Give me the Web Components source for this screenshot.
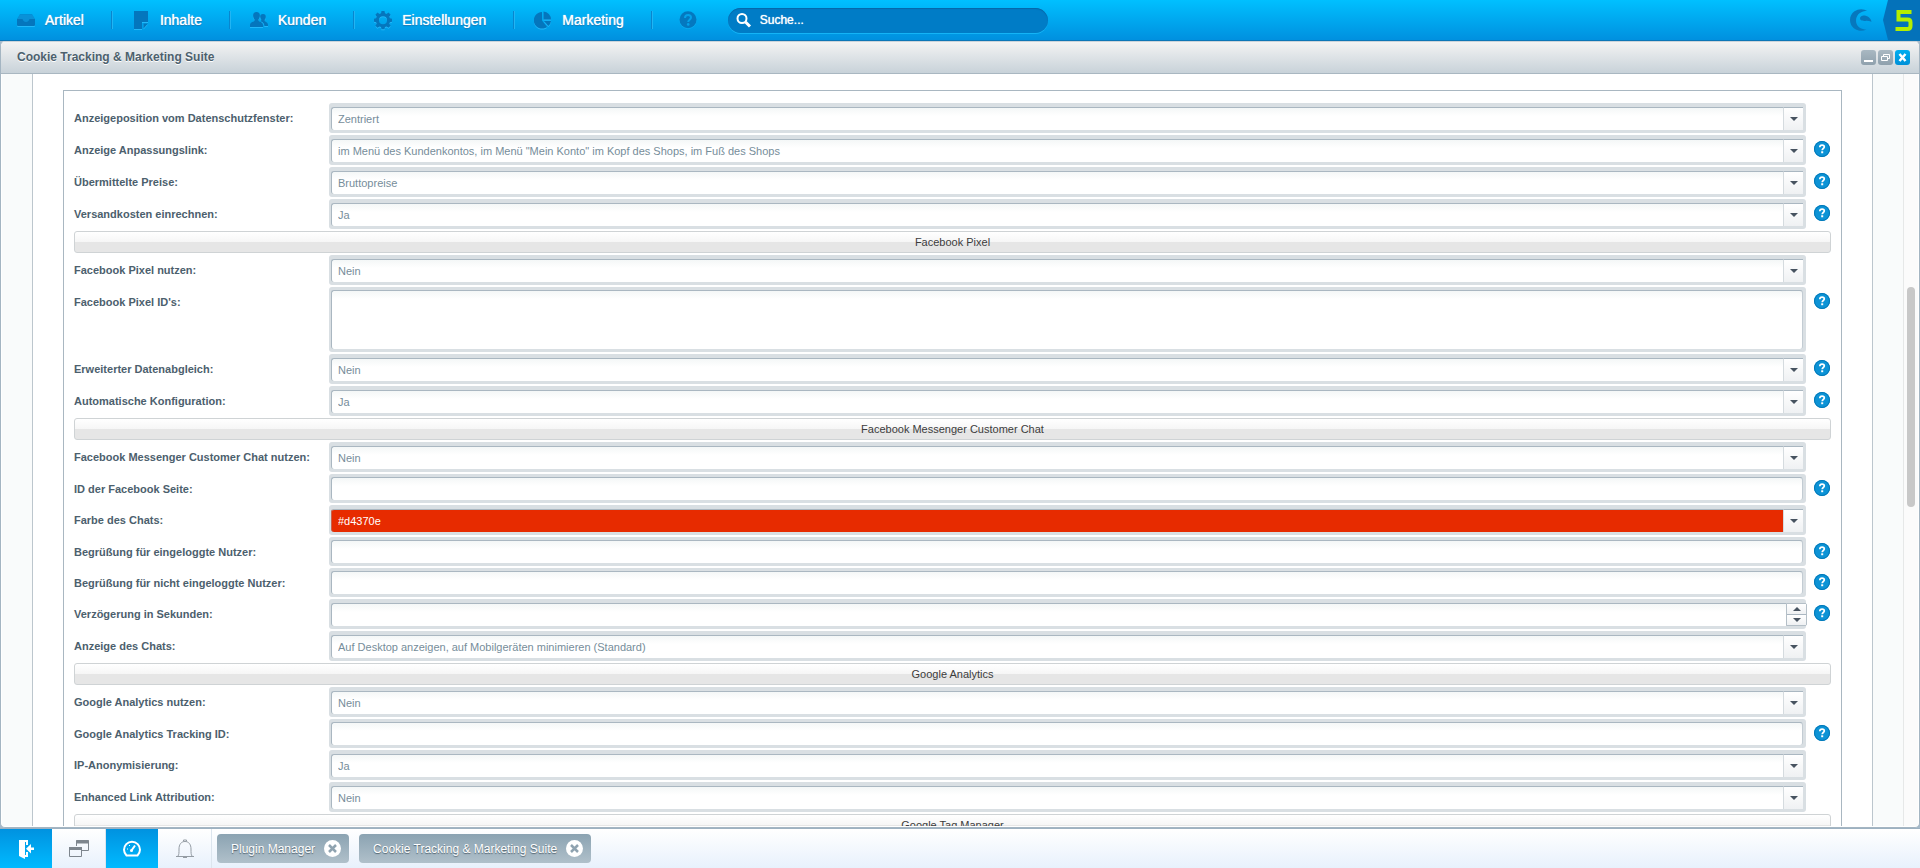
<!DOCTYPE html>
<html lang="de">
<head>
<meta charset="utf-8">
<title>Cookie Tracking &amp; Marketing Suite</title>
<style>
  html, body { margin: 0; height: 100%; }
  body { font-family: "Liberation Sans", Arial, sans-serif; font-size: 11px; background: #fff; overflow: hidden; }
</style>
</head>
<body>
<backend-shell>
  <menu-bar slot="menu">
    <menu-entry label="Artikel" icon="inbox"></menu-entry>
    <menu-entry label="Inhalte" icon="note"></menu-entry>
    <menu-entry label="Kunden" icon="people"></menu-entry>
    <menu-entry label="Einstellungen" icon="gear"></menu-entry>
    <menu-entry label="Marketing" icon="pie"></menu-entry>
  </menu-bar>
  <app-window heading="Cookie Tracking &amp; Marketing Suite">
    <setting-row label="Anzeigeposition vom Datenschutzfenster:" kind="select" value="Zentriert"></setting-row>
    <setting-row label="Anzeige Anpassungslink:" kind="select" value="im Menü des Kundenkontos, im Menü &quot;Mein Konto&quot; im Kopf des Shops, im Fuß des Shops" help></setting-row>
    <setting-row label="Übermittelte Preise:" kind="select" value="Bruttopreise" help></setting-row>
    <setting-row label="Versandkosten einrechnen:" kind="select" value="Ja" help></setting-row>
    <section-bar>Facebook Pixel</section-bar>
    <setting-row label="Facebook Pixel nutzen:" kind="select" value="Nein"></setting-row>
    <setting-row label="Facebook Pixel ID's:" kind="area" help></setting-row>
    <setting-row label="Erweiterter Datenabgleich:" kind="select" value="Nein" help></setting-row>
    <setting-row label="Automatische Konfiguration:" kind="select" value="Ja" help></setting-row>
    <section-bar>Facebook Messenger Customer Chat</section-bar>
    <setting-row label="Facebook Messenger Customer Chat nutzen:" kind="select" value="Nein"></setting-row>
    <setting-row label="ID der Facebook Seite:" kind="text" help></setting-row>
    <setting-row label="Farbe des Chats:" kind="color" value="#d4370e"></setting-row>
    <setting-row label="Begrüßung für eingeloggte Nutzer:" kind="text" help></setting-row>
    <setting-row label="Begrüßung für nicht eingeloggte Nutzer:" kind="text" help></setting-row>
    <setting-row label="Verzögerung in Sekunden:" kind="spin" help></setting-row>
    <setting-row label="Anzeige des Chats:" kind="select" value="Auf Desktop anzeigen, auf Mobilgeräten minimieren (Standard)"></setting-row>
    <section-bar>Google Analytics</section-bar>
    <setting-row label="Google Analytics nutzen:" kind="select" value="Nein"></setting-row>
    <setting-row label="Google Analytics Tracking ID:" kind="text" help></setting-row>
    <setting-row label="IP-Anonymisierung:" kind="select" value="Ja"></setting-row>
    <setting-row label="Enhanced Link Attribution:" kind="select" value="Nein"></setting-row>
    <section-bar>Google Tag Manager</section-bar>
  </app-window>
  <task-bar slot="tasks">
    <task-item>Plugin Manager</task-item>
    <task-item>Cookie Tracking &amp; Marketing Suite</task-item>
  </task-bar>
</backend-shell>

<script>
const MENU_ICONS = {
  inbox: '<path d="M3 4h12l3 5v5.500a1.500 1.500 0 0 1-1.500 1.500h-15A1.500 1.500 0 0 1 0 14.500V9z" opacity=".55"/><path d="M0 9h5.500c.6 2 1.800 3 3.500 3s2.900-1 3.500-3H18v5.500a1.500 1.500 0 0 1-1.500 1.500h-15A1.500 1.500 0 0 1 0 14.500z"/>',
  note: '<path d="M2 1h14v11h-6v7H2z"/><path d="M11.500 13.500H16l-4.500 5z"/>',
  people: '<path d="M6.500 2c2.300 0 3.500 1.600 3.400 3.800-.1 1.600-.7 2.800-1.400 3.500v1.500c0 1 4.500 1.200 4.500 4.200v2H0v-2c0-3 4.500-3.200 4.500-4.200V9.300C3.800 8.600 3.200 7.400 3.100 5.800 3 3.600 4.200 2 6.500 2z"/><path d="M13 4c1.900 0 2.900 1.300 2.800 3.100-.1 1.200-.5 2.100-1.100 2.700v1.300c0 .8 3.300 1.200 3.300 3.600V16h-3.600c-.1-2.600-1.600-3.900-3.800-4.800.4-.4.700-.8.700-1.300 0-.5-.9-1.600-1.100-2.800C10 5.300 11.100 4 13 4z"/>',
  gear: '<path fill-rule="evenodd" d="m7.500 1 3 0 .5 2.300 1.500.6 2-1.300 2.100 2.100-1.300 2 .6 1.500 2.100.5v3l-2.100.5-.6 1.500 1.300 2-2.100 2.100-2-1.300-1.500.6-.5 2.100h-3L7 17.100l-1.500-.6-2 1.300-2.100-2.100 1.300-2-.6-1.500L0 11.700v-3l2.100-.5.6-1.500-1.300-2 2.100-2.100 2 1.300L7 3.300zM9 6.200a4 4 0 1 0 0 8 4 4 0 0 0 0-8z"/>',
  pie: '<path d="M8 2v8.500l5 6.500A8.300 8.300 0 1 1 8 2z"/><path d="M9.500 1.500a8 8 0 0 1 7.500 8H9.500z"/><path d="M10 11h7a7.500 7.500 0 0 1-2.700 5z"/>'
};

function define(name, html, setup) {
  const template = document.createElement('template');
  template.innerHTML = html;
  customElements.define(name, class extends HTMLElement {
    constructor() {
      super();
      this.attachShadow({ mode: 'open' }).append(template.content.cloneNode(true));
    }
    connectedCallback() {
      if (setup && !this.ready) { this.ready = true; setup(this, this.shadowRoot); }
    }
  });
}

define('backend-shell', `
<style>
  :host { display: flex; flex-direction: column; height: 100vh; overflow: hidden; background: #a5bacb; }
  main { flex: 1; min-height: 0; display: flex; }
</style>
<slot name="menu"></slot>
<main><slot></slot></main>
<slot name="tasks"></slot>`);

define('menu-bar', `
<style>
  :host { display: flex; align-items: center; height: 40px; flex: none; border-bottom: 1px solid #0c76b6;
    background: linear-gradient(#00c0ff, #0090df); }
  nav { display: flex; align-items: center; }
  button { border: 0; padding: 0; background: none; display: flex; cursor: pointer; }
  .help { margin-left: 27px; }
  search { display: flex; align-items: center; box-sizing: border-box; width: 320px; height: 25px; margin-left: 31px; padding-left: 8px; gap: 8px;
    border-radius: 13px; background: #007cc6; box-shadow: inset 0 1px 1px #0568a8, 0 1px 0 #14b4f6; }
  input { flex: 1; min-width: 0; border: 0; padding: 0; background: none; outline: 0; color: #fff; font: 12px "Liberation Sans", Arial, sans-serif; text-shadow: 0 0 1px #fff; }
  input::placeholder { color: #fff; opacity: 1; }
  .mark { margin-left: auto; margin-right: 9px; }
  .five { width: 38px; height: 40px; }
</style>
<nav aria-label="Hauptmenü"><slot></slot></nav>
<button class="help" aria-label="Hilfe"><svg width="18" height="18" viewBox="0 0 18 18"><circle cx="9" cy="9.500" r="8.500" fill="#0cb0f4"/><circle cx="9" cy="8.700" r="8.500" fill="#0478bf"/><path d="M6 7c0-2 1.300-3 3.100-3S12 5 12 6.600C12 8.700 9.200 8.700 9.200 11" fill="none" stroke="#05a2ea" stroke-width="2"/><circle cx="9.200" cy="13.400" r="1.300" fill="#05a2ea"/></svg></button>
<search>
  <svg width="16" height="16" viewBox="0 0 16 16" fill="none" stroke="#fff"><circle cx="6" cy="6.500" r="4.500" stroke-width="2"/><path d="m9.500 10 4.500 4.500" stroke-width="3"/></svg>
  <input type="text" placeholder="Suche..." aria-label="Suche">
</search>
<svg class="mark" width="24" height="24" viewBox="0 0 24 24" fill="#0678bd"><path d="M18.500 3.200C15 .6 9.500.4 5.500 3.300 1 6.500 0 12 2 16.500c2.500 5.500 9.500 8 15.500 5-5 0-9.500-2.500-10.300-7C6.200 8.500 10 4.300 15 3.300c1.300-.2 2.500-.3 3.500-.1z"/><path d="M11.500 11.800c-1.200-2 .3-4.200 3-4.300 4 0 7.500 2.500 8 6.300-2-.9-4-1-6-.9-2.200.1-4-.1-5-1.100z"/></svg>
<svg class="five" viewBox="0 0 38 40"><path d="M6 0h32v40H6L1 20z" fill="#0472ba"/><path d="M29.500 12H16.500v7.500h9q3 0 3 3v3.500q0 3-3 3H13.500" fill="none" stroke="#b4ee00" stroke-width="4"/></svg>`);

define('menu-entry', `
<style>
  :host { display: flex; align-items: center; border-right: 1px solid #0886ce; box-shadow: 1px 0 #22b5f3; height: 18px; padding: 0 27px 0 20px; }
  :host(:first-child) { padding-left: 17px; }
  button { display: flex; align-items: center; gap: 10px; height: 20px; padding: 0; border: 0; background: none; cursor: pointer;
    color: #fff; font: 14px "Liberation Sans", Arial, sans-serif; text-shadow: 0 0 1px #fff, 0 1px 1px #0468a6; }
  svg { filter: drop-shadow(0 1px 0 #22b8fa); }
</style>
<button><svg width="18" height="20" viewBox="0 0 18 20" fill="#0476bd"></svg><span></span></button>`,
(host, root) => {
  root.querySelector('svg').innerHTML = MENU_ICONS[host.getAttribute('icon')];
  root.querySelector('span').textContent = host.getAttribute('label');
});

define('app-window', `
<style>
  :host { flex: 1; min-width: 0; display: flex; flex-direction: column; border: 1px solid #a4b5c2; border-top-color: #ccd4da; border-radius: 5px; overflow: hidden; background: #fff; }
  header { display: flex; align-items: center; height: 31px; flex: none; padding: 0 9px 0 16px; gap: 2px;
    border-bottom: 1px solid #a9b7c1; background: linear-gradient(#f3f3f3, #c8d2d9); }
  h1 { flex: 1; margin: 0 0 2px; font-size: 12px; line-height: 16px; color: #4c606d; text-shadow: 0 1px 0 #fff; }
  header button { width: 15px; height: 15px; margin-bottom: 1px; padding: 0; border: 0; border-radius: 3px; background: linear-gradient(#a9b8c2, #8fa1ad); display: flex; }
  header .close { background: linear-gradient(#00aef0, #0090d8); }
  .body { flex: 1; min-height: 0; display: flex; margin: 0 1px 1px; background: #f9fbfb; }
  .page { flex: 1; min-width: 0; margin: 0 30px; padding: 16px 30px 0; overflow: hidden; background: #fff; border: solid #bcc6cd; border-width: 0 1px; }
  form { display: grid; gap: 2px; padding: 12px 10px; border: 1px solid #a9b7c1; }
  .scroll { width: 14px; flex: none; border-left: 1px solid #e6e8e8; background: #fbfbfb; display: grid; grid-template-rows: 213fr 220fr 319fr; justify-items: center; }
  .thumb { grid-row: 2; width: 8px; border-radius: 4px; background: #c8c8c8; }
</style>
<header>
  <h1></h1>
  <button aria-label="Minimieren"><svg width="15" height="15"><path d="M3 10h9v2H3z" fill="#fff"/></svg></button>
  <button aria-label="Wiederherstellen"><svg width="15" height="15" fill="none" stroke="#fff"><path d="M5.500 6.500v-2h6v4h-2M3.500 6.500h6v4h-6z"/></svg></button>
  <button class="close" aria-label="Schließen"><svg width="15" height="15"><path d="m4.500 4 6 7M10.500 4l-6 7" stroke="#fff" stroke-width="2.500"/></svg></button>
</header>
<div class="body">
  <div class="page"><form><slot></slot></form></div>
  <div class="scroll"><div class="thumb"></div></div>
</div>`,
(host, root) => { root.querySelector('h1').textContent = host.getAttribute('heading'); });

define('section-bar', `
<style>
  :host { display: block; }
  h2 { box-sizing: border-box; height: 22px; margin: 0; border: 1px solid #cfd3d5; border-radius: 3px; text-align: center;
    background: linear-gradient(#fff, #f6f6f6 50%, #e6e6e6 50%, #e6e6e6); font-size: 11px; line-height: 20px; font-weight: normal; color: #3c3c3c; }
</style>
<h2><slot></slot></h2>`);

define('setting-row', `
<style>
  :host { display: grid; grid-template-columns: 255px 1fr 17px; align-items: start; }
  label { padding-top: 8px; line-height: 14px; font-weight: bold; color: #4c606d; }
  .frame { box-sizing: border-box; display: flex; height: 30px; margin-right: 8px; padding: 4px 3px 3px 2px; border-radius: 3px; background: #d9dfe3; }
  .frame.text { height: 29px; padding-top: 3px; }
  .frame.area { height: 65px; padding-top: 3px; }
  .frame.spin { padding-right: 0; }
  .control { flex: 1; min-width: 0; box-sizing: border-box; height: 100%; margin: 0; border: 1px solid #aab7c1; border-width: 1px 0 0 1px; border-radius: 3px 0 0 3px; padding: 0 6px;
    outline: 0; appearance: none; resize: none; background: linear-gradient(#f4f7f7, #fff 8px); color: #768d9a; font: 11px "Liberation Sans", Arial, sans-serif; }
  .text .control, .area .control { border-radius: 3px; border-right: 1px solid #c3ccd3; }
  .color .control { background: #e72b00; color: #fff; border-left-color: #c9604c; }
  .trigger { width: 20px; height: 100%; box-sizing: border-box; flex: none; padding: 0; border: solid #aab7c1; border-width: 1px 0 0; border-left: 1px solid #d5dbdf;
    background: linear-gradient(#fff, #eff1f3); display: flex; align-items: center; justify-content: center; }
  .steps { box-sizing: border-box; width: 21px; margin-right: -1px; flex: none; display: flex; flex-direction: column; gap: 1px; background: #aab7c1; border: 1px solid #b4bfc7; border-radius: 0 2px 2px 0; }
  .steps button { flex: 1; padding: 0; border: 0; background: linear-gradient(#fff, #eff1f3); display: flex; align-items: center; justify-content: center; }
  .help { margin-top: 6px; width: 16px; height: 16px; padding: 0; border: 0; border-radius: 8px; background: #0a8fd2; display: flex; }
  [hidden] { display: none; }
</style>
<label for="control"></label>
<div class="frame"></div>
<button class="help" type="button" aria-label="Hilfe" hidden><svg width="16" height="16" viewBox="0 0 16 16"><circle cx="8" cy="8" r="7.500" fill="#0c93d6" stroke="#0479b8"/><path d="M5.800 6.300c0-1.400.9-2.200 2.300-2.200s2.200.8 2.200 1.900c0 1.500-2.100 1.500-2.100 3.200" fill="none" stroke="#fff" stroke-width="1.700"/><path d="M7.200 10.300h2v1.900h-2z" fill="#fff"/></svg></button>`,
(host, root) => {
  const kind = host.getAttribute('kind'), value = host.getAttribute('value') || '';
  root.querySelector('label').textContent = host.getAttribute('label');
  root.querySelector('.help').hidden = !host.hasAttribute('help');
  const frame = root.querySelector('.frame');
  frame.classList.add(kind);
  const control = document.createElement({ select: 'select', area: 'textarea' }[kind] || 'input');
  control.id = 'control';
  control.className = 'control';
  if (kind === 'select') control.add(new Option(value)); else control.value = value;
  frame.append(control);
  const down = '<svg width="8" height="4"><path d="M0 0h8L4 4z" fill="#475360"/></svg>';
  const up = '<svg width="8" height="4"><path d="M0 4h8L4 0z" fill="#475360"/></svg>';
  if (kind === 'select' || kind === 'color')
    frame.insertAdjacentHTML('beforeend', '<button class="trigger" type="button" aria-label="Auswahl öffnen">' + down + '</button>');
  if (kind === 'spin')
    frame.insertAdjacentHTML('beforeend', '<div class="steps"><button type="button" aria-label="Erhöhen">' + up + '</button><button type="button" aria-label="Verringern">' + down + '</button></div>');
});

define('task-bar', `
<style>
  :host { display: flex; align-items: center; height: 39px; flex: none; border-top: 1px solid #9db1c1; background: linear-gradient(#fff, #e8f1fc); }
  button { width: 54px; height: 100%; box-sizing: border-box; border: 0; border-right: 1px solid #dce5ee; padding: 0; background: none; display: flex; align-items: center; justify-content: center; }
  .on { width: 52px; background: linear-gradient(#0092e0, #00baff); border-right: 0; }
  .items { display: flex; gap: 10px; margin-left: 5px; }
</style>
<button class="on" aria-label="Abmelden"><svg width="18" height="20" fill="#fff"><path d="M2 1h9v5H9V3H8v13h1v-3h2v5H8v2L2 17z"/><path d="M17 8.500h-3V5l-5 4.800 5 4.700V11h3z"/></svg></button>
<button aria-label="Fenster"><svg width="20" height="18" fill="none" stroke="#7e868e"><path d="M7.500 6V.5h12v10H13M.5 7.500h12v9H.5z"/><path d="M7 2h13M0 8.500h13" stroke-width="3"/></svg></button>
<button class="on" aria-label="Dashboard"><svg width="20" height="20" fill="none" stroke="#fff"><path d="M4.500 16.500a8 8 0 1 1 11 0z" stroke-width="2"/><path d="m9.500 11.500 3.500-5" stroke-width="2"/><circle cx="9.500" cy="11.500" r="1.500" fill="#fff" stroke="none"/><path d="M5 10h1M7 6l1 1"/></svg></button>
<button aria-label="Benachrichtigungen"><svg width="20" height="20" fill="none" stroke="#949ca4"><path d="M1 17.500h18M3 17c1-1.500 1-3 1-7 0-4.500 2.200-7.500 6-7.500s6 3 6 7.500c0 4 0 5.500 1 7M8.500 2.500V1h3v1.500M8 18.500h4"/></svg></button>
<div class="items"><slot></slot></div>`);

define('task-item', `
<style>
  :host { display: flex; align-items: center; height: 29px; padding: 0 8px 0 14px; gap: 9px; border-radius: 4px; background: linear-gradient(#8ba3b2, #b0c0ca);
    color: #fff; font-size: 12px; text-shadow: 0 1px 1px #52636f; white-space: nowrap; }
  button { width: 17px; height: 17px; padding: 0; border: 0; background: none; display: flex; }
</style>
<span><slot></slot></span>
<button aria-label="Schließen"><svg width="17" height="17"><circle cx="8.500" cy="8.500" r="8.500" fill="#fff"/><path d="m5 5 7 7M12 5l-7 7" stroke="#8fa3b0" stroke-width="2.500"/></svg></button>`);
</script>
</body>
</html>
